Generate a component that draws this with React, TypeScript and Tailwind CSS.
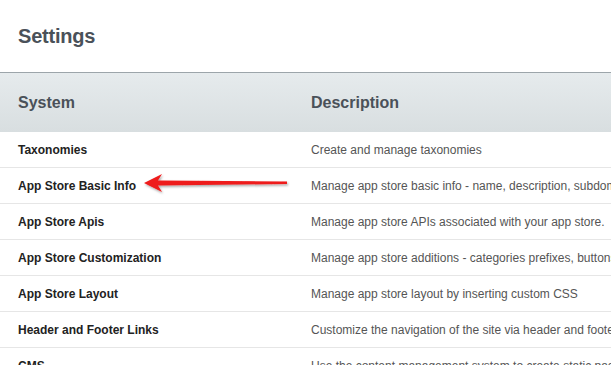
import React from 'react';

const rows = [
  { name: 'Taxonomies', desc: 'Create and manage taxonomies' },
  { name: 'App Store Basic Info', desc: 'Manage app store basic info - name, description, subdomain and more' },
  { name: 'App Store Apis', desc: 'Manage app store APIs associated with your app store.' },
  { name: 'App Store Customization', desc: 'Manage app store additions - categories prefixes, buttons and more' },
  { name: 'App Store Layout', desc: 'Manage app store layout by inserting custom CSS' },
  { name: 'Header and Footer Links', desc: 'Customize the navigation of the site via header and footer links' },
  { name: 'CMS', desc: 'Use the content management system to create static pages' },
];

// red callout arrow pointing at "App Store Basic Info"
const Arrow = () => (
  <svg className="absolute left-[140px] top-[170px]" width="152" height="28" viewBox="0 0 152 28">
    <defs>
      <filter id="sh" x="-10%" y="-50%" width="120%" height="200%">
        <feDropShadow dx="1" dy="1.5" stdDeviation="1" floodColor="#000" floodOpacity="0.35" />
      </filter>
    </defs>
    <path d="M4 13 L22 4 L18 10.5 L147 11.5 L147 14 L18 15.5 L22 22 Z" fill="#ee1c1c" filter="url(#sh)" />
  </svg>
);

export default function App() {
  return (
    <div className="relative w-[611px] h-[365px] overflow-hidden bg-white font-['Liberation_Sans',Arial,sans-serif]">
      <div className="h-[72px] flex items-center pl-[18px]">
        <h1 className="text-[20px] font-bold text-[#4a5159] tracking-[-0.2px]">Settings</h1>
      </div>
      <div className="h-[60px] flex items-center border-t border-[#9ca5aa] bg-gradient-to-b from-[#e6ebed] to-[#d8dee0] text-[16px] font-bold text-[#4a5159]">
        <div className="w-[293px] shrink-0 pl-[18px]">System</div>
        <div className="pl-[18px] shrink-0">Description</div>
      </div>
      {rows.map((r) => (
        <div key={r.name} className="h-[36px] flex items-center border-b border-[#e6e6e6] text-[12px] whitespace-nowrap">
          <div className="w-[293px] shrink-0 pl-[18px] font-bold text-[#222]">{r.name}</div>
          <div className="pl-[18px] shrink-0 text-[#555]">{r.desc}</div>
        </div>
      ))}
      <Arrow />
    </div>
  );
}
